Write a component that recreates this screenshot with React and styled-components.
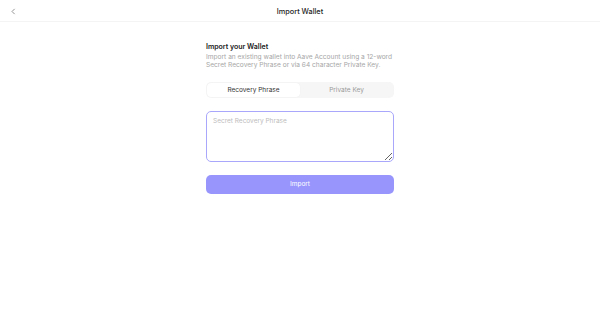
import React, { useState } from "react";
import { styled, createGlobalStyle } from "styled-components";

const GlobalStyle = createGlobalStyle`
  html, body {
    margin: 0;
    padding: 0;
    background: #ffffff;
    font-family: Inter, "Noto Sans", sans-serif;
    -webkit-font-smoothing: antialiased;
  }
  * { box-sizing: border-box; }
`;

function BackIcon() {
  return (
    <svg width="7" height="7" viewBox="0 0 24 24" fill="none" stroke="#7d7d7d" strokeWidth="2.8" strokeLinecap="round" strokeLinejoin="round">
      <path d="M15 4l-8 8 8 8" />
    </svg>
  );
}

export default function App() {
  const [tab, setTab] = useState("phrase");
  return (
    <>
      <GlobalStyle />
      <Page>
        <Header>
          <BackButton aria-label="Back">
            <BackIcon />
          </BackButton>
          <HeaderTitle>Import Wallet</HeaderTitle>
        </Header>
        <Content>
          <Heading>Import your Wallet</Heading>
          <Description>
            Import an existing wallet into Aave Account using a 12-word Secret Recovery Phrase or via 64 character Private Key.
          </Description>
          <Tabs>
            <Tab className={tab === "phrase" ? "active" : ""} onClick={() => setTab("phrase")}>
              Recovery Phrase
            </Tab>
            <Tab className={tab === "key" ? "active" : ""} onClick={() => setTab("key")}>
              Private Key
            </Tab>
          </Tabs>
          <Input placeholder={tab === "phrase" ? "Secret Recovery Phrase" : "Private Key"} />
          <ImportButton>Import</ImportButton>
        </Content>
      </Page>
    </>
  );
}

const Page = styled.div`
  width: 600px;
  min-height: 322px;
  display: flex;
  flex-direction: column;
`;

const Header = styled.div`
  position: relative;
  height: 22px;
  display: flex;
  align-items: center;
  justify-content: center;
  border-bottom: 1px solid #f4f4f4;
`;

const BackButton = styled.button`
  position: absolute;
  left: 10px;
  top: 7.5px;
  width: 7px;
  height: 7px;
  padding: 0;
  border: none;
  background: none;
  display: flex;
  cursor: pointer;
`;

const HeaderTitle = styled.h1`
  margin: 1px 0 0;
  font-size: 7.3px;
  font-weight: 500;
  color: #1f1f1f;
`;

const Content = styled.div`
  width: 188px;
  margin: 19px auto 0;
  display: flex;
  flex-direction: column;
`;

const Heading = styled.h2`
  margin: 0;
  font-size: 7px;
  font-weight: 600;
  color: #1a1a1a;
  line-height: 11px;
`;

const Description = styled.p`
  margin: 1px 0 0;
  font-size: 6.6px;
  line-height: 8.4px;
  color: #a6a6a6;
`;

const Tabs = styled.div`
  margin-top: 12px;
  height: 16px;
  background: #f6f6f6;
  border-radius: 5px;
  padding: 1px;
  display: grid;
  grid-template-columns: 1fr 1fr;
`;

const Tab = styled.button`
  border: none;
  background: transparent;
  border-radius: 4px;
  font-family: inherit;
  font-size: 6.5px;
  color: #999999;
  padding: 0;
  cursor: pointer;
  &.active {
    background: #ffffff;
    color: #333333;
    box-shadow: 0 0 1px rgba(0, 0, 0, 0.08);
  }
`;

const Input = styled.textarea`
  margin-top: 13px;
  height: 51px;
  border: 1px solid #a9a7fb;
  border-radius: 5px;
  padding: 5px 6px;
  font-family: inherit;
  font-size: 6.5px;
  color: #2a2a2a;
  outline: none;
  resize: vertical;
  &::placeholder {
    color: #bdbdbd;
  }
`;

const ImportButton = styled.button`
  margin-top: 13px;
  height: 19px;
  border: none;
  border-radius: 5px;
  background: #9896fc;
  color: #ffffff;
  font-family: inherit;
  font-size: 6.5px;
  cursor: pointer;
`;
